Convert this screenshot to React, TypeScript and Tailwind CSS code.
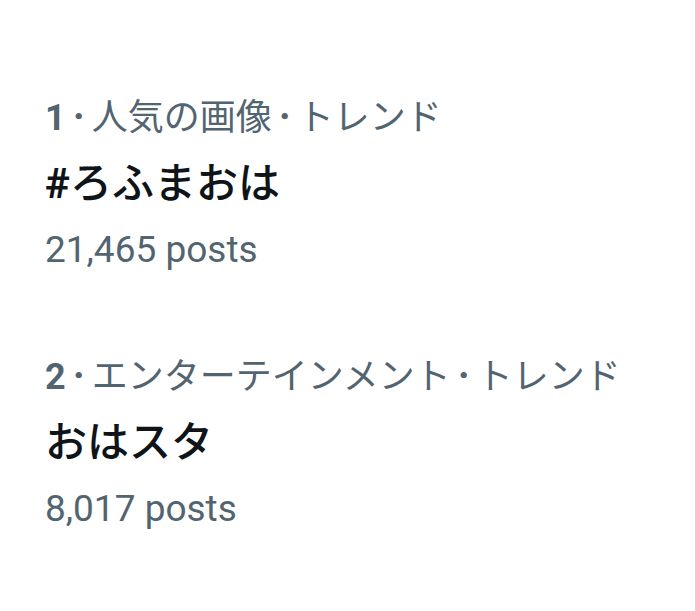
const trends = [
  { rank: '1', category: '人気の画像', name: '#ろふまおは', posts: '21,465 posts' },
  { rank: '2', category: 'エンターテインメント', name: 'おはスタ', posts: '8,017 posts' },
]

function Dot() {
  return <span className="inline-block font-bold text-[40px] mx-[7px]">·</span>
}

function TrendItem({ rank, category, name, posts }: { rank: string; category: string; name: string; posts: string }) {
  return (
    <div className="flex flex-col">
      <div className="text-[36px] leading-[66px] text-[#536471] whitespace-nowrap">
        <span className="font-bold">{rank}</span>
        <Dot />
        <span>{category}</span>
        <Dot />
        <span>トレンド</span>
      </div>
      <div className="text-[42px] leading-[66px] font-medium text-[#0f1419] whitespace-nowrap">
        {name.startsWith('#') ? (
          <>
            <span className="font-bold">#</span>
            {name.slice(1)}
          </>
        ) : (
          name
        )}
      </div>
      <div className="text-[37px] leading-[66px] text-[#536471]">{posts}</div>
    </div>
  )
}

export default function App() {
  return (
    <div
      className="w-[695px] h-[611px] overflow-hidden bg-white pt-[84px] pl-[45px] flex flex-col gap-[60px]"
      style={{ fontFamily: 'Roboto, "Noto Sans CJK JP", sans-serif' }}
    >
      {trends.map((t) => (
        <TrendItem key={t.rank} {...t} />
      ))}
    </div>
  )
}
